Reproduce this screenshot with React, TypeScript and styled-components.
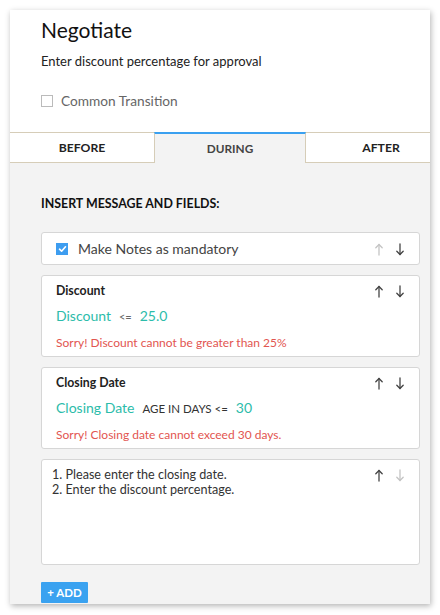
import React from "react";
import styled, { createGlobalStyle } from "styled-components";

const Global = createGlobalStyle`
  html, body { margin: 0; padding: 0; background: #ffffff; }
  body { font-family: Lato, "Open Sans", "Liberation Sans", sans-serif; color: #222; }
  * { box-sizing: border-box; }
`;

const Page = styled.div`
  padding: 10px;
  width: 440px;
  height: 615px;
`;

const Panel = styled.div`
  width: 420px;
  height: 594px;
  background: #f3f3f3;
  box-shadow: 1px 2px 6px rgba(0, 0, 0, 0.3);
  overflow: hidden;
  display: flex;
  flex-direction: column;
`;

const Header = styled.div`
  flex-shrink: 0;
  background: #fff;
  padding: 7px 31px 0;
  height: 122px;
`;

const Title = styled.h1`
  margin: 0;
  font-size: 21px;
  font-weight: 400;
  color: #111;
  line-height: 26px;
`;

const Subtitle = styled.p`
  margin: 9px 0 0;
  font-size: 13px;
  color: #222;
  line-height: 18px;
`;

const CheckRow = styled.label`
  display: flex;
  align-items: center;
  gap: 8px;
  margin-top: 22px;
  font-size: 13.7px;
  color: #666;
`;

const EmptyBox = styled.span`
  width: 12px;
  height: 12px;
  border: 1px solid #bbb;
  background: #fff;
`;

const Tabs = styled.div`
  flex-shrink: 0;
  display: grid;
  grid-template-columns: 144px 152px 150px;
  height: 31px;
`;

const Tab = styled.div<{ $active?: boolean }>`
  display: flex;
  align-items: center;
  justify-content: center;
  font-size: ${(p) => (p.$active ? "11.8px" : "12.2px")};
  font-weight: 700;
  color: ${(p) => (p.$active ? "#444" : "#222")};
  background: ${(p) => (p.$active ? "#f3f3f3" : "#fff")};
  border-top: ${(p) => (p.$active ? "2px solid #3aa0f0" : "1px solid #d6cdb8")};
  border-bottom: ${(p) => (p.$active ? "none" : "1px solid #d6cdb8")};
  border-left: ${(p) => (p.$active ? "1px solid #d6cdb8" : "none")};
  border-right: ${(p) => (p.$active ? "1px solid #d6cdb8" : "none")};
`;

const Body = styled.div`
  padding: 33px 10px 0 31px;
  display: flex;
  flex-direction: column;
`;

const SectionTitle = styled.div`
  font-size: 12.4px;
  line-height: 15px;
  font-weight: 700;
  color: #111;
  margin-bottom: 21px;
`;

const Card = styled.div<{ $tall?: boolean }>`
  background: #fff;
  border: 1px solid #d6d6d6;
  border-radius: 3px;
  padding: ${(p) => (p.$tall ? "7px 14px 8px 10px" : "7px 14px 6px 14px")};
  margin-bottom: 10px;
  min-height: ${(p) => (p.$tall ? "106px" : "auto")};
  display: flex;
  flex-direction: column;
`;

const CardHead = styled.div`
  display: flex;
  align-items: center;
  justify-content: space-between;
  min-height: 16px;
`;

const NoteHead = styled.div`
  display: flex;
  align-items: flex-start;
  justify-content: space-between;
`;

const CardTitle = styled.div`
  font-size: 12.3px;
  line-height: 16px;
  font-weight: 700;
  color: #222;
`;

const Arrows = styled.div<{ $top?: number }>`
  display: flex;
  gap: 11px;
  align-items: center;
  margin-top: ${(p) => p.$top ?? 0}px;
`;

const NoteRow = styled.div`
  display: flex;
  align-items: center;
  gap: 10px;
  font-size: 14px;
  line-height: 18px;
  color: #444;
`;

const BlueCheck = styled.span`
  width: 12px;
  height: 12px;
  background: #3d9df0;
  display: inline-flex;
  align-items: center;
  justify-content: center;
`;

const Condition = styled.div`
  display: flex;
  align-items: baseline;
  gap: 8px;
  margin-top: 8px;
  font-size: 14px;
  line-height: 18px;
  color: #2cbcaa;
`;

const Op = styled.span<{ $caps?: boolean }>`
  font-size: ${(p) => (p.$caps ? "11.5px" : "11px")};
  color: ${(p) => (p.$caps ? "#333" : "#666")};
`;

const ErrorText = styled.div`
  margin-top: 10px;
  font-size: 12px;
  line-height: 14px;
  color: #e25550;
`;

const NoteText = styled.div`
  font-size: 12.6px;
  line-height: 15px;
  color: #333;
`;

const AddButton = styled.button`
  margin-top: 7px;
  align-self: flex-start;
  width: 47px;
  height: 21px;
  border: none;
  border-radius: 1px;
  background: #3aa2f0;
  color: #fff;
  font-family: inherit;
  font-size: 11.5px;
  font-weight: 700;
  padding: 0;
`;

const Arrow = ({ dir, light }: { dir: "up" | "down"; light?: boolean }) => (
  <svg width="10" height="13" viewBox="0 0 10 13" fill="none"
    stroke={light ? "#c4c4c4" : "#444"} strokeWidth="1.3" strokeLinecap="round" strokeLinejoin="round">
    {dir === "up" ? (
      <>
        <path d="M5 1.5V12" />
        <path d="M1.8 4.8L5 1.5L8.2 4.8" />
      </>
    ) : (
      <>
        <path d="M5 1V11.5" />
        <path d="M1.8 8.2L5 11.5L8.2 8.2" />
      </>
    )}
  </svg>
);

const ArrowPair = ({ upLight, downLight, top }: { upLight?: boolean; downLight?: boolean; top?: number }) => (
  <Arrows $top={top}>
    <Arrow dir="up" light={upLight} />
    <Arrow dir="down" light={downLight} />
  </Arrows>
);

export default function App() {
  return (
    <Page>
      <Global />
      <Panel>
        <Header>
          <Title>Negotiate</Title>
          <Subtitle>Enter discount percentage for approval</Subtitle>
          <CheckRow>
            <EmptyBox />
            Common Transition
          </CheckRow>
        </Header>
        <Tabs>
          <Tab>BEFORE</Tab>
          <Tab $active>DURING</Tab>
          <Tab>AFTER</Tab>
        </Tabs>
        <Body>
          <SectionTitle>INSERT MESSAGE AND FIELDS:</SectionTitle>
          <Card>
            <CardHead>
              <NoteRow>
                <BlueCheck>
                  <svg width="9" height="8" viewBox="0 0 9 8" fill="none" stroke="#fff" strokeWidth="1.6" strokeLinecap="round" strokeLinejoin="round">
                    <path d="M1.5 4.2L3.6 6.2L7.5 1.8" />
                  </svg>
                </BlueCheck>
                Make Notes as mandatory
              </NoteRow>
              <ArrowPair upLight />
            </CardHead>
          </Card>
          <Card>
            <CardHead>
              <CardTitle>Discount</CardTitle>
              <ArrowPair />
            </CardHead>
            <Condition>
              Discount <Op>&lt;=</Op> 25.0
            </Condition>
            <ErrorText>Sorry! Discount cannot be greater than 25%</ErrorText>
          </Card>
          <Card>
            <CardHead>
              <CardTitle>Closing Date</CardTitle>
              <ArrowPair />
            </CardHead>
            <Condition>
              Closing Date <Op $caps>AGE IN DAYS &lt;=</Op> 30
            </Condition>
            <ErrorText>Sorry! Closing date cannot exceed 30 days.</ErrorText>
          </Card>
          <Card $tall>
            <NoteHead>
              <NoteText>
                1. Please enter the closing date.
                <br />
                2. Enter the discount percentage.
              </NoteText>
              <ArrowPair downLight top={2} />
            </NoteHead>
          </Card>
          <AddButton>+ ADD</AddButton>
        </Body>
      </Panel>
    </Page>
  );
}
